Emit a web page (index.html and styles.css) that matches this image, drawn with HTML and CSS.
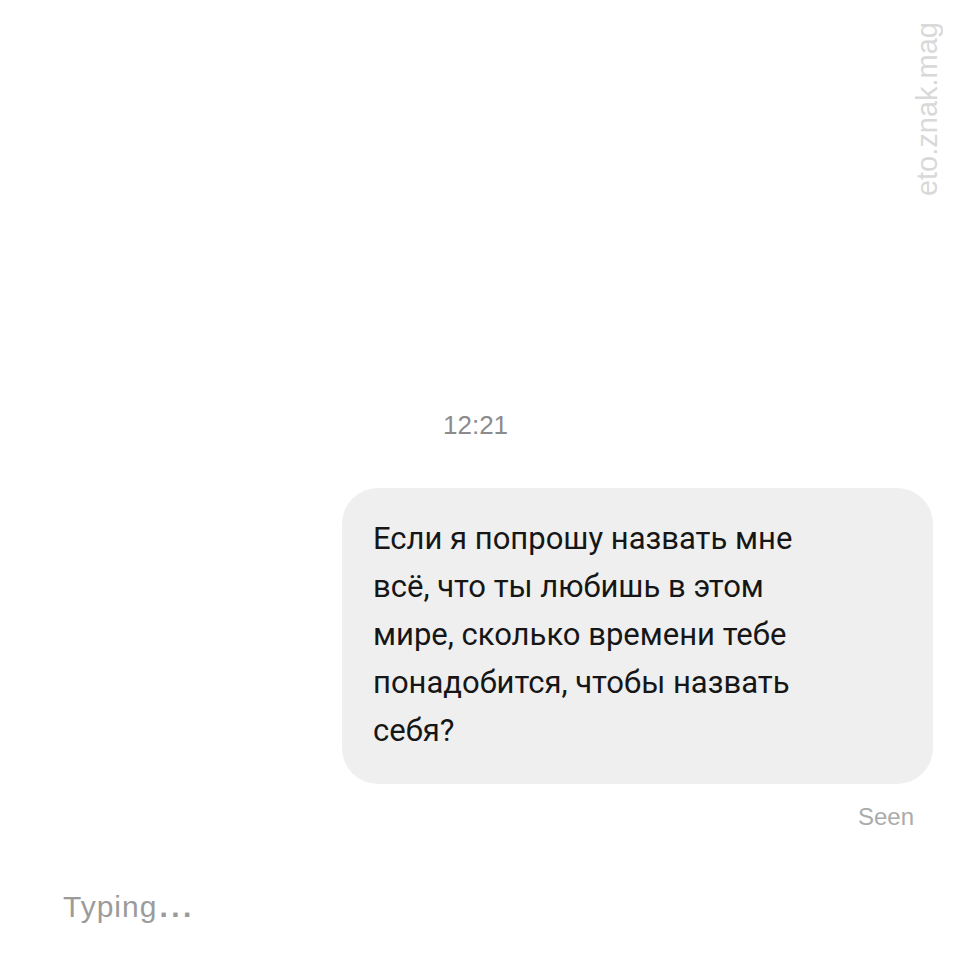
FILE: index.html
```html
<!DOCTYPE html>
<html lang="ru">
<head>
  <meta charset="UTF-8" /><meta name="viewport" content="width=device-width, initial-scale=1.0"/>
  <title>Direct</title>
  <link rel="stylesheet" href="styles.css">
</head>
<body>
  <div class="chat">
    <div class="watermark">eto.znak.mag</div>

    <div class="time">12:21</div>

    <div class="row">
      <div class="bubble">Если я попрошу назвать мне всё, что ты любишь в этом мире, сколько времени тебе понадобится, чтобы назвать себя?</div>
    </div>

    <div class="seen">Seen</div>

    <div class="typing">Typing<span class="dots">...</span></div>
  </div>
</body>
</html>
```

FILE: styles.css
```css
* { box-sizing: border-box; margin: 0; padding: 0; }

body {
  background: #fff;
  color: #111;
  font-family: Roboto, 'Liberation Sans', sans-serif;
  width: 960px;
  height: 960px;
  overflow: hidden;
}

.chat {
  position: relative;
  height: 960px;
  display: flex;
  flex-direction: column;
}

.watermark {
  position: absolute;
  top: 22px;
  right: 17px;
  writing-mode: vertical-rl;
  transform: rotate(180deg);
  font-family: 'Liberation Sans', sans-serif;
  font-size: 29px;
  line-height: 32px;
  color: #d9d9d9;
}

.time {
  margin-top: 410px;
  padding-left: 443px;
  font-family: 'Liberation Sans', sans-serif;
  font-size: 26px;
  line-height: 30px;
  color: #8c8c8c;
}

.row {
  display: flex;
  justify-content: flex-end;
  margin-top: 48px;
  padding-right: 27px;
}

.bubble {
  width: 591px;
  background: #efefef;
  border-radius: 36px;
  padding: 27px 90px 29px 31px;
  font-size: 31px;
  line-height: 48px;
  color: #161616;
}

.seen {
  margin-top: 19px;
  align-self: flex-end;
  padding-right: 46px;
  font-family: 'Liberation Sans', sans-serif;
  font-size: 24px;
  line-height: 28px;
  color: #ababab;
}

.typing {
  margin-top: 59px;
  padding-left: 63px;
  font-family: 'Liberation Sans', sans-serif;
  font-size: 30px;
  line-height: 34px;
  letter-spacing: 1px;
  color: #9b9b9b;
}

.typing .dots {
  margin-left: 2px;
  letter-spacing: 3.5px;
  font-weight: bold;
}
```
